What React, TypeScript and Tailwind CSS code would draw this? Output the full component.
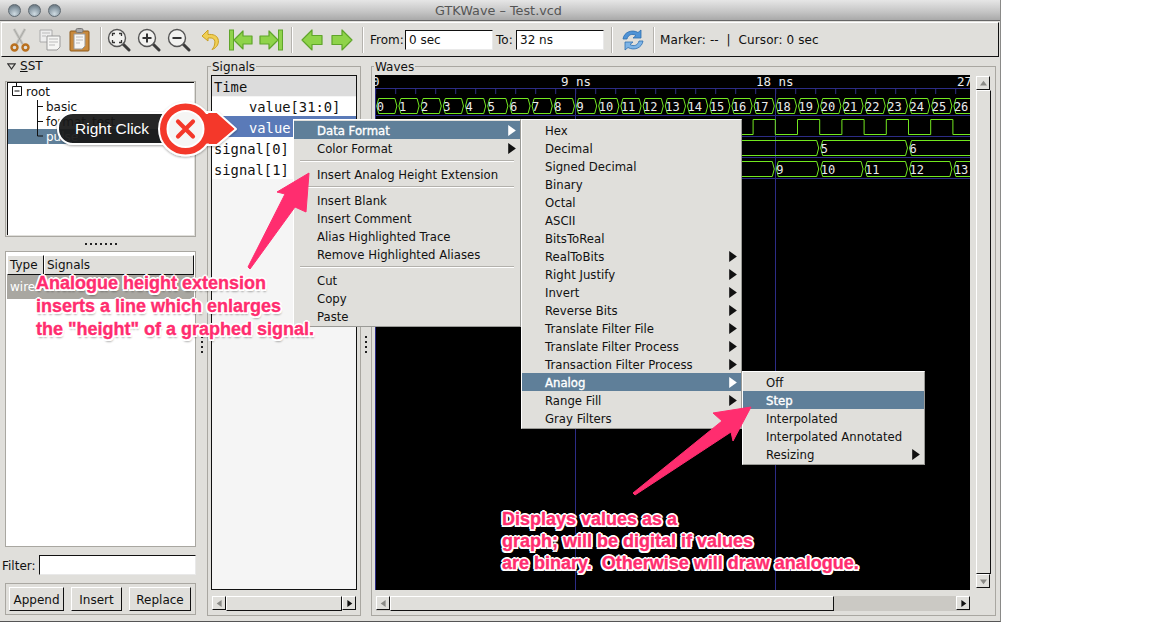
import React from "react";

const SANS = "font-['DejaVu_Sans',sans-serif]";
const MONO = "font-['DejaVu_Sans_Mono',monospace]";
const BEVEL = "border border-t-white border-l-white border-r-[#111] border-b-[#111]";
const PINK = "font-['Liberation_Sans',sans-serif] font-bold text-[#ff2d6f] text-[18px] whitespace-pre [-webkit-text-stroke:0.35px_#ff2d6f] [text-shadow:2px_0_0_#fff,-2px_0_0_#fff,0_2px_0_#fff,0_-2px_0_#fff,1.5px_1.5px_0_#fff,-1.5px_-1.5px_0_#fff,1.5px_-1.5px_0_#fff,-1.5px_1.5px_0_#fff,1px_3px_2px_#0005]";

function Light() {
  return (
    <div className="w-[13px] h-[13px] rounded-full border border-[#5f6a72] bg-[radial-gradient(circle_at_50%_80%,#cfdbe2_0%,#8d9da8_55%,#56646e_100%)]" />
  );
}

function Tri({ dir, cls = "#111", s = 10 }: { dir: "l" | "r" | "u" | "d"; cls?: string; s?: number }) {
  const p = { r: "2,0 9,5 2,10", l: "8,0 1,5 8,10", u: "0,8 5,1 10,8", d: "0,2 5,9 10,2" }[dir];
  return (
    <svg width={s} height={s} viewBox="0 0 10 10" className="shrink-0">
      <polygon points={p} fill={cls} />
    </svg>
  );
}

function Sep() {
  return <div className="w-[2px] h-[26px] border-l border-[#b5b3ae] bg-white shrink-0" />;
}

const Ic = ({ children, mr = 6 }: { children: React.ReactNode; mr?: number }) => (
  <svg width={24} height={24} viewBox="0 0 24 24" className="shrink-0" style={{ marginRight: mr }}>
    {children}
  </svg>
);

function Magnifier({ kind, mr = 6 }: { kind: "fit" | "in" | "out"; mr?: number }) {
  return (
    <Ic mr={mr}>
      <line x1="15.5" y1="15.5" x2="22" y2="22" stroke="#3c3c3c" strokeWidth="3" strokeLinecap="round" />
      <circle cx="10" cy="10" r="8.5" fill="#f2f2f0" stroke="#555" strokeWidth="1.4" />
      {kind === "in" && <path d="M5.5 10h9M10 5.5v9" stroke="#333" strokeWidth="2" />}
      {kind === "out" && <path d="M5.5 10h9" stroke="#333" strokeWidth="2" />}
      {kind === "fit" && (
        <path d="M5.5 8V5.5H8M12 5.5h2.5V8M14.5 12v2.5H12M8 14.5H5.5V12" fill="none" stroke="#333" strokeWidth="1.3" />
      )}
    </Ic>
  );
}

const G = "#8fd34a";
const GS = "#5fa52a";

function Icons1() {
  return (
    <>
      <Ic>
        <path d="M6 1 L14.5 16 M17 1 L8.5 16" stroke="#c4c4c0" strokeWidth="2.6" />
        <path d="M6 1 L14.5 16 M17 1 L8.5 16" stroke="#8f8f8b" strokeWidth=".5" />
        <circle cx="6.5" cy="19.5" r="3" fill="none" stroke="#b9701f" strokeWidth="2.4" />
        <circle cx="17.5" cy="19.5" r="3" fill="none" stroke="#b9701f" strokeWidth="2.4" />
      </Ic>
      <Ic>
        <path d="M2 2h12v12H2z" fill="#eee" stroke="#aaa" />
        <path d="M9 8h13v11l-3 3H9z" fill="#f6f6f4" stroke="#999" />
        <path d="M11 11h9M11 14h9M11 17h6M4 5h8M4 8h4" stroke="#bbb" />
      </Ic>
      <Ic mr={8}>
        <rect x="2" y="3" width="19" height="20" rx="1" fill="#c98a3c" stroke="#8d5a1c" />
        <rect x="8" y="0.5" width="7" height="4" rx="1.5" fill="#aaa" stroke="#777" />
        <path d="M6 6h11v12l-3 3H6z" fill="#f7f7f5" stroke="#999" />
        <path d="M8 9h7M8 12h7M8 15h4" stroke="#bbb" />
      </Ic>
      <Sep />
    </>
  );
}

function GreenArrow({ flip, bar, mr = 6 }: { flip?: boolean; bar?: boolean; mr?: number }) {
  return (
    <svg width={24} height={24} viewBox="0 0 24 24" className="shrink-0" style={{ marginRight: mr, transform: flip ? "scaleX(-1)" : undefined }}>
      {bar && <rect x="0.5" y="2" width="4" height="20" fill={G} stroke={GS} />}
      <path
        d={bar ? "M5 12 L14 3 V8 H23 V16 H14 V21 Z" : "M2 12 L12 2 V7.5 H22 V16.5 H12 V22 Z"}
        fill={G}
        stroke={GS}
        strokeWidth="1.2"
        strokeLinejoin="round"
      />
    </svg>
  );
}

function Toolbar() {
  return (
    <div className={`${BEVEL} mx-[1px] mt-[1px] h-[35px] flex items-center pl-[6px] ${SANS} text-[12px] text-[#111] w-[998px]`}>
      <Icons1 />
      <div className="w-[5px]" />
      <Magnifier kind="fit" />
      <Magnifier kind="in" />
      <Magnifier kind="out" mr={8} />
      <Ic mr={6}>
        <path d="M9 2 L3 8 L9 13 V10 C14 9.5 17 11 15.5 17 C15 19 13.5 21 13 21.5 C18 20 20.5 15 19 11 C18 7.5 14 6 9 6.5 Z" fill="#f0cf55" stroke="#c99f22" strokeWidth="1" strokeLinejoin="round" />
      </Ic>
      <GreenArrow bar />
      <GreenArrow bar flip mr={8} />
      <Sep />
      <div className="w-[7px]" />
      <GreenArrow />
      <GreenArrow flip mr={8} />
      <Sep />
      <span className="ml-[6px] w-[35px]">From:</span>
      <div className="w-[88px] h-[20px] bg-white border border-t-[#111] border-l-[#111] border-r-[#e9e9e9] border-b-[#e9e9e9] pl-[3px] leading-[18px]">0 sec</div>
      <span className="ml-[3px] w-[20px]">To:</span>
      <div className="w-[88px] h-[20px] bg-white border border-t-[#111] border-l-[#111] border-r-[#e9e9e9] border-b-[#e9e9e9] pl-[3px] leading-[18px]">32 ns</div>
      <div className="w-[7px]" />
      <Sep />
      <div className="w-[8px]" />
      <Ic mr={8}>
        <path d="M2 11 C3 4 11 1 17 4.5 L20 2 V10 H12 L15 7.5 C11 5 7 7 6 11 Z" fill="#4f93d6" stroke="#2f6fae" strokeWidth=".8" />
        <path d="M22 13 C21 20 13 23 7 19.5 L4 22 V14 H12 L9 16.5 C13 19 17 17 18 13 Z" fill="#7db4e6" stroke="#2f6fae" strokeWidth=".8" />
      </Ic>
      <Sep />
      <span className="ml-[5px] whitespace-pre tracking-[0.1px]">Marker: --  |  Cursor: 0 sec</span>
    </div>
  );
}

function Tree() {
  const rows: [string, boolean][] = [["basic", false], ["format_test", false], ["pulse", true]];
  return (
    <div className="relative h-[156px] border border-[#a9a7a1] pl-[1px] pr-[1px] pb-[1px]">
      <div className={`relative h-full bg-white border-t border-l border-t-[#111] border-l-[#111] pt-[1px] ${SANS} text-[12px] text-[#111]`}>
        <div className="h-[15px] leading-[17px] pl-[18px]">root</div>
        {rows.map(([t, sel]) => (
          <div key={t} className={`h-[15px] leading-[17px] pl-[38px] ${sel ? "bg-[#5f7f99] text-white" : ""}`}>
            {t}
          </div>
        ))}
        <svg width="50" height="62" className="absolute left-0 top-0">
          <path d="M8.5 0V3M4.5 3.5h9v9h-9zM6.5 8h5M29.5 17V53M29.5 23.5H35M29.5 38.5H35M29.5 53H35" fill="none" stroke="#111" />
        </svg>
      </div>
    </div>
  );
}

function Btn({ t, w, ml }: { t: string; w: number; ml: number }) {
  return (
    <div
      className={`${BEVEL} h-[24px] text-center leading-[24px] bg-[#e0dfdb]`}
      style={{ width: w, marginLeft: ml }}
    >
      {t}
    </div>
  );
}

function LeftCol() {
  return (
    <div className={`ml-[5px] w-[191px] shrink-0 flex flex-col ${SANS} text-[12px] text-[#111]`}>
      <div className="h-[23px] flex items-center pl-[2px] gap-[4px] pb-[7px]">
        <svg width="9" height="7" viewBox="0 0 9 7" className="shrink-0">
          <polygon points="0.8,0.8 8.2,0.8 4.5,6" fill="#e0dfdb" stroke="#333" strokeWidth="1.2" />
        </svg>
        <span>
          <span className="underline underline-offset-1">S</span>ST
        </span>
      </div>
      <Tree />
      <div className="h-[14px] flex items-center justify-center">
        {[0, 1, 2, 3, 4, 5, 6].map((i) => (
          <div key={i} className="w-[2px] h-[2px] bg-[#222] mx-[1.5px]" />
        ))}
      </div>
      <div className="h-[296px] border border-[#a9a7a1] bg-white flex flex-col px-[1px] pt-[3px]">
        <div className="flex h-[20px] shrink-0">
          <div className={`${BEVEL} w-[37px] pl-[2px] leading-[18px] bg-[#e0dfdb]`}>Type</div>
          <div className={`${BEVEL} flex-1 pl-[2px] leading-[18px] bg-[#e0dfdb]`}>Signals</div>
        </div>
        <div className="h-[24px] bg-[#a9a7a1] text-white pl-[3px] leading-[24px]">wire</div>
      </div>
      <div className="mt-[8px] h-[20px] flex items-center -ml-[3px]">
        <span className="w-[37px] pt-[1px]">Filter:</span>
        <div className="flex-1 h-[20px] bg-white border border-t-[#111] border-l-[#111] border-r-[#e9e9e9] border-b-[#e9e9e9]" />
      </div>
      <div className="mt-[8px] h-[32px] border border-[#a9a7a1] flex items-center">
        <Btn t="Append" w={55} ml={3} />
        <Btn t="Insert" w={51} ml={7} />
        <Btn t="Replace" w={62} ml={7} />
      </div>
    </div>
  );
}

function Dots({ w }: { w: number }) {
  return (
    <div
      className="shrink-0 self-stretch flex flex-col items-center justify-center gap-[3px] pt-[14px]"
      style={{ width: w }}
    >
      {[0, 1, 2, 3].map((i) => (
        <div key={i} className="w-[2px] h-[2px] bg-[#222]" />
      ))}
    </div>
  );
}

function ArrowBtn({ d }: { d: "l" | "r" | "u" | "d" }) {
  const grey = d === "l" || d === "u" || d === "d";
  return (
    <div className={`${BEVEL} w-[14px] h-[14px] shrink-0 flex items-center justify-center bg-[#e0dfdb]`}>
      <Tri dir={d} s={7} cls={grey ? "#8a8a86" : "#111"} />
    </div>
  );
}

function SignalsPane() {
  const rows = [
    { t: "value[31:0]", pl: 37, h: 19, lh: 21, bg: "bg-white" },
    { t: "value", pl: 37, h: 21, lh: 25, bg: "bg-[#5a7ab8] text-white" },
    { t: "signal[0]", pl: 2, h: 21, lh: 25, bg: "bg-white" },
    { t: "signal[1]", pl: 2, h: 21, lh: 25, bg: "bg-white" },
  ];
  return (
    <div className="relative mt-[8px] h-[550px] w-[154px] shrink-0 border border-[#a9a7a1] pt-[8px] px-[3px]">
      <span className={`absolute left-[3px] -top-[8px] px-[1px] bg-[#e0dfdb] ${SANS} text-[12px] text-[#111] leading-[16px]`}>Signals</span>
      <div className={`h-[515px] bg-[#f5f5f5] border border-[#111] ${MONO} text-[13.8px] text-[#111]`}>
        <div className="h-[20px] bg-[#dcdcdc] pl-[2px] leading-[23px]">Time</div>
        <div className="h-[1px] bg-[#f5f5f5]" />
        {rows.map((r) => (
          <div key={r.t} className={r.bg} style={{ height: r.h, lineHeight: `${r.lh}px`, paddingLeft: r.pl }}>
            {r.t}
          </div>
        ))}
      </div>
      <div className="mt-[6px] flex h-[15px] mx-[1px]">
        <ArrowBtn d="l" />
        <div className={`${BEVEL} flex-1 bg-[#e0dfdb]`} />
        <ArrowBtn d="r" />
      </div>
    </div>
  );
}

function busPath(xs: number[], top: number, bot: number) {
  const mid = (top + bot) / 2;
  let d = "";
  for (let i = 0; i < xs.length - 1; i++) {
    const a = xs[i] + 1;
    const b = xs[i + 1] - 1;
    d += `M${a} ${mid}L${a + 2} ${top}L${b - 2} ${top}L${b} ${mid}L${b - 2} ${bot}L${a + 2} ${bot}Z`;
  }
  return d;
}

function WaveChart() {
  const T = 22.2;
  const x0 = 0.7;
  const X = (k: number) => x0 + T * k;
  const ticks: number[] = [];
  for (let x = 0; x < 595; x += 20) ticks.push(x0 + x);
  const all = Array.from({ length: 28 }, (_, i) => i);
  const clock = () => {
    let d = `M${X(0)} 59.5`;
    for (let i = 0; i < 27; i++) {
      const y = i % 2 === 0 ? 59.5 : 44.5;
      d += `L${X(i)} ${y}L${X(i + 1)} ${y}`;
    }
    return d;
  };
  const s0 = [0, 4, 8, 12, 16, 20, 24, 28];
  const s1 = Array.from({ length: 15 }, (_, i) => i * 2);
  const lines = [13.5, 40.5, 61.5, 82.5, 103.5];
  const blue = "#2c2c86";
  const green = "#72e81f";
  return (
    <svg width="595" height="515" className={`block ${MONO} shrink-0`} viewBox="0 0 595 515">
      <rect width="595" height="515" fill="#000" />
      {[0.5, 200.5, 400.5].map((x) => (
        <line key={x} x1={x} x2={x} y1={13} y2={515} stroke={blue} />
      ))}
      {lines.map((y) => (
        <line key={y} x1={0} x2={595} y1={y} y2={y} stroke={blue} />
      ))}
      {ticks.map((x) => (
        <line key={x} x1={x} x2={x} y1={14} y2={19} stroke={blue} />
      ))}
      <g fill="#ececec" fontSize="12.5">
        <text x="-3" y="11">0</text>
        <text x="186" y="11">9 ns</text>
        <text x="381" y="11">18 ns</text>
        <text x="582" y="11">27</text>
      </g>
      <path d={busPath(all.map(X), 23.5, 38.5)} fill="none" stroke={green} />
      <path d={clock()} fill="none" stroke={green} />
      <path d={busPath(s0.map(X), 65.5, 80.5)} fill="none" stroke={green} />
      <path d={busPath(s1.map(X), 86.5, 101.5)} fill="none" stroke={green} />
      <g fill="#ececec" fontSize="12">
        {all.slice(0, 27).map((k) => (
          <text key={k} x={X(k) + 1} y="36">{k}</text>
        ))}
        {s0.slice(0, 7).filter((k) => X(k) > 367).map((k) => (
          <text key={k} x={X(k) + 1} y="78">{k / 4}</text>
        ))}
        {s1.slice(0, 14).filter((k) => X(k) > 367).map((k) => (
          <text key={k} x={X(k) + 1} y="99">{k / 2}</text>
        ))}
      </g>
    </svg>
  );
}

function WavesPane() {
  return (
    <div className="relative mt-[8px] h-[550px] w-[625px] shrink-0 border border-[#a9a7a1] pt-[8px] pl-[3px] flex flex-col">
      <span className={`absolute left-[2px] -top-[8px] px-[1px] bg-[#e0dfdb] ${SANS} text-[12px] text-[#111] leading-[16px]`}>Waves</span>
      <div className="flex h-[515px]">
        <WaveChart />
        <div className="ml-[6px] w-[15px] mt-[1px] h-[512px] flex flex-col">
          <ArrowBtn d="u" />
          <div className={`${BEVEL} flex-1 bg-[#e0dfdb]`} />
          <ArrowBtn d="d" />
        </div>
      </div>
      <div className="mt-[6px] flex h-[15px] w-[594px] ml-[1px] bg-[#cbc9c4]">
        <ArrowBtn d="l" />
        <div className={`${BEVEL} w-[444px] bg-[#e0dfdb]`} />
        <div className="flex-1" />
        <ArrowBtn d="r" />
      </div>
    </div>
  );
}

type Item = { t?: string; sub?: boolean; on?: boolean; sep?: boolean };

function Menu({ items, cls, pl }: { items: Item[]; cls: string; pl: number }) {
  return (
    <div className={`absolute ${cls} bg-[#e0dfdb] border border-t-white border-l-white border-r-[#9a9a96] border-b-[#9a9a96] py-[1px] ${SANS} text-[11.7px] text-[#111]`}>
      {items.map((it, i) =>
        it.sep ? (
          <div key={i} className="h-[8px] flex items-center mx-[6px]">
            <div className="h-[2px] w-full border-t border-[#b3b1ac] bg-white" />
          </div>
        ) : (
          <div
            key={i}
            className={`h-[18px] flex items-center justify-between pr-[3px] ${it.on ? "bg-[#5f7f99] text-white [-webkit-text-stroke:0.35px_#fff]" : ""}`}
            style={{ paddingLeft: pl }}
          >
            <span className="relative top-[2px]">{it.t}</span>
            {it.sub && <Tri dir="r" s={11} cls={it.on ? "#fff" : "#111"} />}
          </div>
        ),
      )}
    </div>
  );
}

const M1: Item[] = [
  { t: "Data Format", sub: true, on: true },
  { t: "Color Format", sub: true },
  { sep: true },
  { t: "Insert Analog Height Extension" },
  { sep: true },
  { t: "Insert Blank" },
  { t: "Insert Comment" },
  { t: "Alias Highlighted Trace" },
  { t: "Remove Highlighted Aliases" },
  { sep: true },
  { t: "Cut" },
  { t: "Copy" },
  { t: "Paste" },
];
const M2: Item[] = [
  { t: "Hex" },
  { t: "Decimal" },
  { t: "Signed Decimal" },
  { t: "Binary" },
  { t: "Octal" },
  { t: "ASCII" },
  { t: "BitsToReal" },
  { t: "RealToBits", sub: true },
  { t: "Right Justify", sub: true },
  { t: "Invert", sub: true },
  { t: "Reverse Bits", sub: true },
  { t: "Translate Filter File", sub: true },
  { t: "Translate Filter Process", sub: true },
  { t: "Transaction Filter Process", sub: true },
  { t: "Analog", sub: true, on: true },
  { t: "Range Fill", sub: true },
  { t: "Gray Filters" },
];
const M3: Item[] = [
  { t: "Off" },
  { t: "Step", on: true },
  { t: "Interpolated" },
  { t: "Interpolated Annotated" },
  { t: "Resizing", sub: true },
];

function Overlays() {
  return (
    <>
      <Menu items={M1} cls="left-[293px] top-[119px] w-[228px]" pl={23} />
      <Menu items={M2} cls="left-[521px] top-[119px] w-[221px]" pl={23} />
      <Menu items={M3} cls="left-[742px] top-[371px] w-[183px]" pl={23} />

      <svg width="1157" height="622" className="absolute left-0 top-0 pointer-events-none">
        <defs>
          <filter id="sh" x="-20%" y="-20%" width="140%" height="140%">
            <feDropShadow dx="0" dy="1" stdDeviation="1.2" floodColor="#000" floodOpacity=".35" />
          </filter>
        </defs>
        <polygon points="309,173 277,192 285,194 248,267 250,269 295,207 306,212" fill="#ff2d6f" stroke="#ff2d6f" strokeLinejoin="round" />
        <polygon points="751,407 713,413 722,421 633,493 635,495 731,432 733,441" fill="#ff2d6f" stroke="#ff2d6f" strokeLinejoin="round" />
        <g filter="url(#sh)">
          <rect x="58" y="113" width="120" height="31" rx="15" fill="#141618" fillOpacity=".9" stroke="#fff" strokeWidth="2" />
          <path d="M205 112 H217 L236 129 L217 145 H205 Z" fill="#f4392a" stroke="#fff" strokeWidth="2" strokeLinejoin="round" />
          <circle cx="185.5" cy="129" r="26.5" fill="#f4392a" stroke="#fff" strokeWidth="2" />
          <path d="M205 114 H216.5 L234 129 L216.5 143.5 H205 Z" fill="#f4392a" />
          <circle cx="185.5" cy="129" r="18" fill="#f5f5f4" stroke="#fff" strokeWidth="2" />
          <path d="M178 121.5 L193 136.5 M193 121.5 L178 136.5" stroke="#f4392a" strokeWidth="4.2" strokeLinecap="round" />
        </g>
      </svg>

      <span className="absolute left-[75px] top-[120px] font-['Liberation_Sans',sans-serif] text-[15.5px] leading-[18px] text-white">Right Click</span>

      <div className={`absolute left-[36px] top-[272px] leading-[23px] ${PINK}`}>
        {"Analogue height extension\ninserts a line which enlarges\nthe \"height\" of a graphed signal."}
      </div>
      <div className={`absolute left-[502px] top-[508px] leading-[22px] ${PINK}`}>
        {"Displays values as a\ngraph; will be digital if values\nare binary.  Otherwise will draw analogue."}
      </div>
    </>
  );
}

export default function App() {
  return (
    <div className="relative w-[1157px] h-[622px] bg-white overflow-hidden">
      <div className="w-[1001px] h-[622px] bg-[#e0dfdb] border-r border-b border-r-[#8a8a88] border-b-[#555] flex flex-col overflow-hidden">
        <div className="relative h-[21px] shrink-0 bg-[linear-gradient(#e6e6e6,#c4c4c4_60%,#a9a9a9)] border-b border-[#666] flex items-center pl-[8px] gap-[7px]">
          <Light />
          <Light />
          <Light />
          <div className={`flex-1 text-center pr-[71px] pt-[1px] ${SANS} text-[12.8px] text-[#555]`}>GTKWave – Test.vcd</div>
        </div>
        <Toolbar />
        <div className="flex mt-[1px]">
          <LeftCol />
          <Dots w={11} />
          <SignalsPane />
          <Dots w={10} />
          <WavesPane />
        </div>
      </div>
      <Overlays />
    </div>
  );
}
